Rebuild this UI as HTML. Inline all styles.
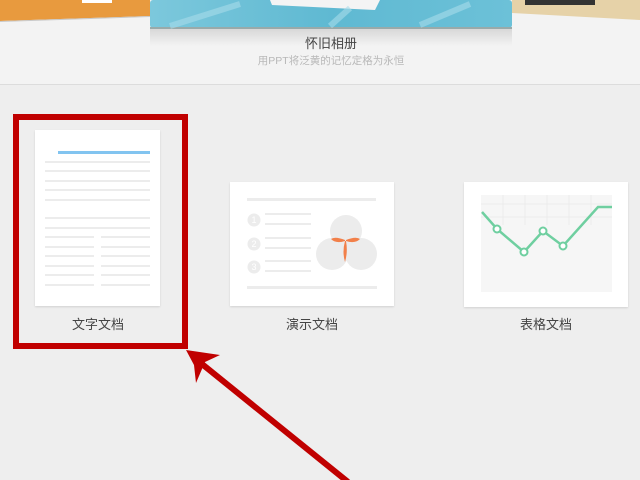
<!DOCTYPE html>
<html><head><meta charset="utf-8"><style>
html,body{margin:0;padding:0;}
body{width:640px;height:480px;position:relative;overflow:hidden;background:#eeeeee;font-family:"Liberation Sans","Noto Sans CJK SC",sans-serif;}
.top{position:absolute;left:0;top:0;width:640px;height:84px;background:#f3f3f3;border-bottom:1px solid #dcdcdc;}
.card{position:absolute;background:#fff;box-shadow:0 1px 2px rgba(0,0,0,0.12);}
.lbl{position:absolute;font-size:13px;color:#444;text-align:center;width:120px;}
.l{position:absolute;height:2px;background:#ececec;}
</style></head><body>
<div class="top"></div>
<svg width="640" height="90" style="position:absolute;left:0;top:0">
<defs>
<linearGradient id="sh" x1="0" y1="0" x2="0" y2="1"><stop offset="0" stop-color="#cfcfcf"/><stop offset="1" stop-color="#f3f3f3"/></linearGradient>
<linearGradient id="bl" x1="0" y1="0" x2="1" y2="0"><stop offset="0" stop-color="#7cc8dc"/><stop offset="0.5" stop-color="#5fb9d2"/><stop offset="1" stop-color="#6cc1d8"/></linearGradient>
</defs>
<polygon points="0,0 150,0 150,16 0,21" fill="#e89a3e"/>
<polygon points="0,21 150,16 150,17 0,22" fill="#c9c9c9"/>
<rect x="82" y="0" width="30" height="3" fill="#fff"/>
<polygon points="512,0 640,0 640,20 512,13" fill="#e6d2a8"/>
<rect x="525" y="0" width="70" height="5" fill="#333"/>
<rect x="150" y="28" width="362" height="18" fill="url(#sh)" opacity="0.8"/>
<rect x="150" y="0" width="362" height="28" rx="3" fill="url(#bl)"/>
<rect x="150" y="27" width="362" height="2" fill="#9aa"/>
<polygon points="270,0 380,0 375,10 272,5" fill="#f4f4f4"/>
<path d="M170 26 L240 4 M330 26 L350 8 M420 25 L470 4" stroke="#a8dcea" stroke-width="6" opacity="0.6"/>
<text x="331" y="48" text-anchor="middle" font-size="13" fill="#444" font-family="Liberation Sans,Noto Sans CJK SC,sans-serif">怀旧相册</text>
<text x="331" y="64" text-anchor="middle" font-size="10.5" fill="#b8b8b8" font-family="Liberation Sans,Noto Sans CJK SC,sans-serif">用PPT将泛黄的记忆定格为永恒</text>
</svg>

<div class="card" style="left:35px;top:130px;width:125px;height:176px;">
<div class="l" style="left:23px;top:21px;width:92px;background:#82c4f0;height:3px"></div>
<div class="l" style="left:10px;top:31px;width:105px"></div>
<div class="l" style="left:10px;top:40px;width:105px"></div>
<div class="l" style="left:10px;top:50px;width:105px"></div>
<div class="l" style="left:10px;top:59px;width:105px"></div>
<div class="l" style="left:10px;top:69px;width:105px"></div>
<div class="l" style="left:10px;top:87px;width:105px"></div>
<div class="l" style="left:10px;top:97px;width:105px"></div>
<div class="l" style="left:10px;top:106px;width:49px"></div><div class="l" style="left:66px;top:106px;width:49px"></div>
<div class="l" style="left:10px;top:116px;width:49px"></div><div class="l" style="left:66px;top:116px;width:49px"></div>
<div class="l" style="left:10px;top:125px;width:49px"></div><div class="l" style="left:66px;top:125px;width:49px"></div>
<div class="l" style="left:10px;top:135px;width:49px"></div><div class="l" style="left:66px;top:135px;width:49px"></div>
<div class="l" style="left:10px;top:144px;width:49px"></div><div class="l" style="left:66px;top:144px;width:49px"></div>
<div class="l" style="left:10px;top:154px;width:49px"></div><div class="l" style="left:66px;top:154px;width:49px"></div>
</div>
<div class="lbl" style="left:38px;top:314px">文字文档</div>

<div class="card" style="left:230px;top:182px;width:164px;height:124px;"></div>
<svg width="640" height="480" style="position:absolute;left:0;top:0">
<g fill="#ececec">
<rect x="247" y="198" width="129" height="3"/>
<rect x="247" y="286" width="130" height="3"/>
<circle cx="254" cy="220" r="6.5"/><circle cx="254" cy="244" r="6.5"/><circle cx="254" cy="267" r="6.5"/>
<rect x="265" y="213" width="46" height="2"/><rect x="265" y="223" width="46" height="2"/>
<rect x="265" y="237" width="46" height="2"/><rect x="265" y="247" width="46" height="2"/>
<rect x="265" y="260" width="46" height="2"/><rect x="265" y="270" width="46" height="2"/>
<circle cx="346" cy="231" r="16"/><circle cx="332" cy="254" r="16"/><circle cx="361" cy="254" r="16"/>
</g>
<g fill="#fff" font-size="9" text-anchor="middle" font-family="Liberation Sans,sans-serif"><text x="254" y="223">1</text><text x="254" y="247">2</text><text x="254" y="270">3</text></g>
<g fill="#f2804a">
<path d="M345 240 Q335 236 331 239 Q336 244 345 241Z"/>
<path d="M346 240 Q356 236 360 239 Q355 244 346 241Z"/>
<path d="M345 241 Q342 252 345 262 Q348 252 346 241Z"/>
</g>
<rect x="481" y="195" width="131" height="97" fill="#f6f6f6"/>
<g stroke="#ececec" stroke-width="1"><line x1="481" y1="204" x2="612" y2="204"/><line x1="481" y1="217" x2="612" y2="217"/><line x1="503" y1="195" x2="503" y2="225"/><line x1="525" y1="195" x2="525" y2="225"/><line x1="547" y1="195" x2="547" y2="225"/><line x1="569" y1="195" x2="569" y2="225"/><line x1="591" y1="195" x2="591" y2="225"/></g>
<polyline points="482,212 497,229 524,252 543,231 563,246 598,207 612,207" fill="none" stroke="#6fcfa0" stroke-width="2.5"/>
<g fill="#fff" stroke="#6fcfa0" stroke-width="2"><circle cx="497" cy="229" r="3.5"/><circle cx="524" cy="252" r="3.5"/><circle cx="543" cy="231" r="3.5"/><circle cx="563" cy="246" r="3.5"/></g>
<rect x="16" y="117" width="169" height="229" fill="none" stroke="#c00000" stroke-width="6"/>
<line x1="197" y1="360" x2="348" y2="482" stroke="#c00000" stroke-width="6"/>
<polygon points="186,350 220,355 205,362 196,383 194,365" fill="#c00000"/>
</svg>
<div class="card" style="left:464px;top:182px;width:164px;height:125px;z-index:-1"></div>
<div class="lbl" style="left:252px;top:314px">演示文档</div>
<div class="lbl" style="left:486px;top:314px">表格文档</div>
</body></html>
